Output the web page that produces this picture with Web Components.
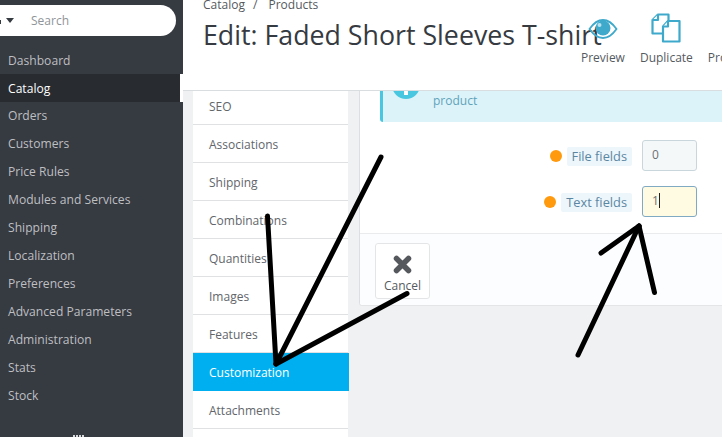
<!DOCTYPE html>
<html>
<head>
<meta charset="utf-8">
<style>
  html, body { margin: 0; height: 100%; overflow: hidden; }
  body { font-family: "Open Sans", sans-serif; background: #eff1f2; }
</style>
</head>
<body>
<admin-page></admin-page>
<script>
class SideNav extends HTMLElement {
    constructor() {
        super();
        this.attachShadow({ mode: "open" });
    }

    connectedCallback() {
        const items = ["Dashboard", "Catalog", "Orders", "Customers", "Price Rules", "Modules and Services", "Shipping",
            "Localization", "Preferences", "Advanced Parameters", "Administration", "Stats", "Stock"];
        this.shadowRoot.innerHTML = `
        <style>
            :host { display: block; position: relative; background: #363a41; height: 437px; overflow: hidden; }
            .search {
                display: flex; align-items: center; height: 31px; width: 196px;
                margin: 5px 0 10px -20px; padding-left: 51px; box-sizing: border-box;
                background: #fff; border-radius: 16px; color: #8f9498; font-size: 12px;
            }
            .caret { position: absolute; left: 6px; top: 18px; border: 4px solid transparent; border-top: 5px solid #363a41; border-bottom: 0; }
            .mag { position: absolute; left: -3px; top: 20px; width: 4px; height: 4px; background: #363a41; }
            ul { list-style: none; margin: 0; padding: 0; }
            li { height: 28px; line-height: 28px; padding-left: 8px; font-size: 12.100px; letter-spacing: .01px; color: #bebfc1; }
            li:nth-child(-n+2) { line-height: 30px; }
            li.active { background: #282b30; color: #fff; margin-right: 3px; box-shadow: 3px 0 0 #fff; }
            .grip { position: absolute; left: 73px; bottom: 0; width: 11px; height: 2px;
                background: repeating-linear-gradient(90deg, #d8d9da 0 2px, transparent 2px 3px); }
        </style>
        <div class="search">Search</div>
        <i class="mag"></i><i class="caret"></i>
        <ul>${items.map(t => `<li class="${t === "Catalog" ? "active" : ""}">${t}</li>`).join("")}</ul>
        <i class="grip"></i>`;
    }
}

class PageHead extends HTMLElement {
    constructor() {
        super();
        this.attachShadow({ mode: "open" });
    }

    connectedCallback() {
        this.shadowRoot.innerHTML = `
        <style>
            :host { display: block; position: relative; height: 90px; background: #fff; border-bottom: 1px solid #d9dde0; box-sizing: content-box; overflow: hidden; }
            .crumb { margin: -4px 0 0 20px; height: 18px; line-height: 18px; font-size: 12px; color: #555a60; }
            .crumb span { margin: 0 8px; }
            h1 { margin: 3px 0 0 20px; font-size: 26.750px; line-height: 36px; font-weight: 400; color: #363a41; white-space: nowrap; }
            .tools { position: absolute; left: 398px; top: 0; display: flex; gap: 15px; color: #555a60; font-size: 12px; }
            .tool { display: flex; flex-direction: column; align-items: center; height: 66px; justify-content: flex-end; white-space: nowrap; }
            svg { display: block; margin-bottom: 6px; }
        </style>
        <div class="crumb">Catalog<span>/</span> Products</div>
        <h1>Edit: Faded Short Sleeves T-shirt</h1>
        <div class="tools">
            <div class="tool">
                <svg width="30" height="20" viewBox="0 0 30 20" style="margin-bottom:10px"><path d="M1.500 10C6 3.500 10 1 15 1s9 2.500 13.500 9C24 16.500 20 19 15 19S6 16.500 1.500 10z" fill="none" stroke="#3ea9cb" stroke-width="1.800"/><circle cx="15" cy="9" r="7.500" fill="#3ea9cb"/><circle cx="11.500" cy="6" r="2" fill="#b9e3f0"/></svg>
                <span>Preview</span>
            </div>
            <div class="tool">
                <svg width="30" height="30" viewBox="0 0 30 30"><g fill="#fff" stroke="#3ea9cb" stroke-width="2.200" stroke-linejoin="round"><path d="M7 1.500h10.500v19H1.500V7z"/><path d="M7 1.500V7H1.500"/><path d="M17 8h11.500v20.500H12V13.500z"/><path d="M17 8v5.500h-5"/></g></svg>
                <span>Duplicate</span>
            </div>
            <div class="tool"><svg width="30" height="30"></svg><span>Product</span></div>
        </div>`;
    }
}

class TabList extends HTMLElement {
    constructor() {
        super();
        this.attachShadow({ mode: "open" });
    }

    connectedCallback() {
        const tabs = ["SEO", "Associations", "Shipping", "Combinations", "Quantities", "Images", "Features", "Customization", "Attachments", ""];
        this.shadowRoot.innerHTML = `
        <style>
            :host { display: block; width: 155px; background: #fff; font-size: 12px; color: #62666b; }
            div { height: 36px; padding-top: 1px; line-height: 38px; padding-left: 16px; border-bottom: 1px solid #dfe1e3; }
            div:first-of-type { height: 33px; padding-top: 0; line-height: 31px; }
            div.active { background: #00aff0; color: #fff; font-weight: 500; border-bottom-color: #00aff0; margin-right: -1px; }
        </style>
        ${tabs.map(t => `<div class="${t === "Customization" ? "active" : ""}">${t}</div>`).join("")}`;
    }
}

class FieldRow extends HTMLElement {
    constructor() {
        super();
        this.attachShadow({ mode: "open" });
    }

    connectedCallback() {
        const focused = this.hasAttribute("focused");
        this.shadowRoot.innerHTML = `
        <style>
            :host { display: flex; align-items: center; justify-content: flex-end; gap: 10px; padding-right: 25px; height: 31px; }
            .dot { width: 12px; height: 12px; border-radius: 50%; background: #ff9a0f; margin-right: -5px; }
            label { background: #edf6fb; color: #5b86a3; font-size: 12.800px; padding: 0 5px; line-height: 19px; border-radius: 2px; margin-top: 2px; }
            .box { width: 55px; height: 31px; box-sizing: border-box; padding-left: 9px; line-height: 28px; font-size: 12px; color: #6c6f73;
                background: ${focused ? "#fffbe2" : "#f5f8f9"}; border: 1px solid ${focused ? "#80a9c4" : "#c9d6dc"}; border-radius: 3px; }
            .cursor { display: inline-block; width: 1px; height: 15px; background: #222; vertical-align: -3px; }
        </style>
        <i class="dot"></i><label><slot></slot></label>
        <div class="box">${this.getAttribute("value")}${focused ? '<i class="cursor"></i>' : ""}</div>`;
    }
}

class FormPanel extends HTMLElement {
    constructor() {
        super();
        this.attachShadow({ mode: "open" });
    }

    connectedCallback() {
        this.shadowRoot.innerHTML = `
        <style>
            :host { display: block; background: #fff; border-left: 1px solid #dcdfe1; height: 214px; border-bottom-left-radius: 3px; box-shadow: 0 1px 0 #e3e5e7; overflow: hidden; }
            .alert { display: flex; height: 31px; margin-left: 20px; background: #dcf4f9; border-left: 3px solid #4ac7e0; border-bottom-left-radius: 3px; overflow: hidden; color: #5fa3bb; font-size: 12px; }
            .ico { width: 28px; height: 28px; margin: -20px 13px 0 9px; flex: none; display: block; }
            .alert span { line-height: 20px; }
            .rows { display: flex; flex-direction: column; gap: 15px; margin-top: 18px; height: 77px; }
            .foot { margin-top: 16px; height: 72px; border-top: 1px solid #e9ebed; background: #fcfdfe; padding: 9px 0 0 15px; box-sizing: border-box; }
            .cancel { width: 55px; height: 56px; box-sizing: border-box; background: #fff; border: 1px solid #e3e5e7; border-radius: 3px;
                display: flex; flex-direction: column; align-items: center; color: #555a60; font-size: 12px; padding-top: 11px; line-height: 17px; }
            .cancel svg { display: block; margin-bottom: 3px; }
        </style>
        <div class="alert">
            <svg class="ico" viewBox="0 0 28 28"><circle cx="14" cy="14" r="14" fill="#4ac7e0"/><rect x="12" y="19" width="4" height="5" fill="#fff"/></svg>
            <span>product</span>
        </div>
        <div class="rows">
            <field-row value="0">File fields</field-row>
            <field-row value="1" focused>Text fields</field-row>
        </div>
        <div class="foot">
            <div class="cancel">
                <svg width="19" height="19" viewBox="0 0 19 19"><path d="M3.500 3.500l12 12M15.500 3.500l-12 12" stroke="#55585d" stroke-width="5.500" stroke-linecap="round"/></svg>
                Cancel
            </div>
        </div>`;
    }
}

class ArrowMarks extends HTMLElement {
    constructor() {
        super();
        this.attachShadow({ mode: "open" });
    }

    connectedCallback() {
        this.shadowRoot.innerHTML = `
        <style>
            :host { display: block; position: absolute; left: 0; top: 0; pointer-events: none; }
            svg { display: block; }
        </style>
        <svg width="722" height="437" fill="none" stroke="#000" stroke-linecap="round" stroke-linejoin="round" stroke-width="5">
            <path d="M381 157L276 364"/>
            <path d="M267.500 216L276 364"/>
            <path d="M407 293.500L276 364"/>
            <path d="M578 355L639 226"/>
            <path d="M601 253L639 226"/>
            <path d="M654.500 292.500L639 226"/>
        </svg>`;
    }
}

class AdminPage extends HTMLElement {
    constructor() {
        super();
        this.attachShadow({ mode: "open" });
    }

    connectedCallback() {
        this.shadowRoot.innerHTML = `
        <style>
            :host { display: grid; grid-template-columns: 183px 1fr; width: 722px; height: 437px; position: relative; overflow: hidden; }
            main { min-width: 0; overflow: hidden; }
            .body { display: grid; grid-template-columns: 155px 1fr; gap: 11px; padding-left: 10px; }
        </style>
        <side-nav></side-nav>
        <main>
            <page-head></page-head>
            <div class="body">
                <tab-list></tab-list>
                <form-panel></form-panel>
            </div>
        </main>
        <arrow-marks></arrow-marks>`;
    }
}

customElements.define("side-nav", SideNav);
customElements.define("page-head", PageHead);
customElements.define("tab-list", TabList);
customElements.define("field-row", FieldRow);
customElements.define("form-panel", FormPanel);
customElements.define("arrow-marks", ArrowMarks);
customElements.define("admin-page", AdminPage);
</script>
</body>
</html>
